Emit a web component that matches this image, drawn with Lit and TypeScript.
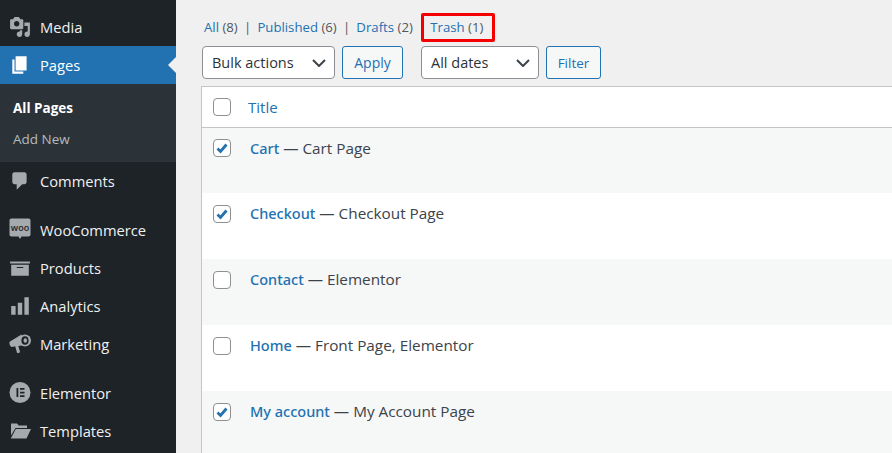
import { LitElement, html, css, svg } from "lit";
import { customElement } from "lit/decorators.js";

const d = (p: string) => svg`<g transform="scale(1.1)"><path d=${p}/></g>`;

const icons: Record<string, any> = {
  media: d("M13 11V4c0-.55-.45-1-1-1h-1.670L9 1H5L3.670 3H2c-.55 0-1 .45-1 1v7c0 .55.45 1 1 1h10c.55 0 1-.45 1-1zM7 4.500c1.380 0 2.500 1.120 2.500 2.500S8.380 9.500 7 9.500 4.500 8.380 4.500 7 5.620 4.500 7 4.500zM14 6h5v10.500c0 1.380-1.120 2.500-2.500 2.500S14 17.880 14 16.500s1.120-2.500 2.500-2.500c.17 0 .34.020.5.050V9h-3V6zm-4 8.050V13h2v3.500c0 1.380-1.120 2.500-2.500 2.500S7 17.880 7 16.500 8.120 14 9.500 14c.17 0 .34.020.5.050z"),
  pages: d("M6 15V2h10v13H6zm-1 1h8v2H3V5h2v11z"),
  comments: d("M5 2h9c1.100 0 2 .9 2 2v7c0 1.100-.9 2-2 2h-2l-5 5v-5H5c-1.100 0-2-.9-2-2V4c0-1.100.9-2 2-2z"),
  woo: svg`<path d="M2.500-.5h17c1.200 0 2 .8 2 2v14c0 1.200-.8 2-2 2h-7l-1.500 2.500-1.500-2.500h-7c-1.200 0-2-.8-2-2v-14c0-1.200.8-2 2-2z"/>
    <text x="11" y="11.500" text-anchor="middle" font-size="9" font-weight="600" fill="#1d2327" font-family="'Open Sans',sans-serif">woo</text>`,
  products: d("M19 4v2H1V4h18zM2 7h16v10H2V7zm11 3V9H7v1h6z"),
  analytics: d("M18 18V2h-4v16h4zm-6 0V7H8v11h4zm-6 0v-8H2v8h4z"),
  marketing: svg`<path d="M12.500 1.500 1 8.500c-.7.500-.7 1.800-.3 3 .4 1.300 1.200 2.500 2.200 2.500l3.300-.7 1.700 6c.2.700.7 1 1.400.8l1-.3c.6-.2.800-.7.600-1.300L9.300 13l6.200-1z"/><circle cx="16" cy="7.500" r="6"/><ellipse cx="16" cy="7.500" rx="3.600" ry="4.300" fill="#1d2327"/><ellipse cx="16.300" cy="7.500" rx="1.700" ry="2.300"/>`,
  elementor: svg`<circle cx="11" cy="10.500" r="10.500"/><path d="M7.500 6h1.800v9H7.500zM11 6h4.500v1.700H11zM11 9.700h4.500v1.700H11zM11 13.300h4.500v1.700H11z" fill="#1d2327"/>`,
  templates: svg`<path d="M2 3.500h6l1.800 2H18V8H6.500L2 15.500z"/><path d="M6.800 9H22l-4.500 9.500H1.800z"/>`,
};

const check = html`<svg viewBox="0 0 14 14"><path d="M2.500 7.500l3 3 6-7"/></svg>`;
const chevron = html`<svg viewBox="0 0 14 8"><path d="M1 1l6 6 6-6"/></svg>`;

const rows = [
  { t: "Cart", s: "Cart Page", c: true },
  { t: "Checkout", s: "Checkout Page", c: true },
  { t: "Contact", s: "Elementor", c: false },
  { t: "Home", s: "Front Page, Elementor", c: false },
  { t: "My account", s: "My Account Page", c: true },
];

@customElement("app-root")
export class AppRoot extends LitElement {
  static styles = css`
    :host { display: flex; width: 892px; height: 453px; overflow: hidden; background: #f0f0f1; font-family: "Open Sans", "Noto Sans", sans-serif; color: #3c434a; }
    * { box-sizing: border-box; }
    .side { width: 176px; flex: none; height: 453px; background: #1d2327; padding-top: 8px; color: #f0f0f1; overflow: hidden; }
    .item { height: 38px; display: flex; align-items: center; font-size: 14.700px; position: relative; }
    .item .ic { width: 40px; flex: none; display: flex; justify-content: center; }
    .item svg { width: 22px; height: 22px; fill: #a7aaad; overflow: visible; }
    .item.cur { background: #2271b1; color: #fff; }
    .item.cur svg { fill: #fff; }
    .item.cur::after { content: ""; position: absolute; right: 0; top: 11px; border: 8px solid transparent; border-right-color: #f0f0f1; border-left-width: 0; }
    .sub { background: #2c3338; height: 78px; padding: 8px 0 0 13px; font-size: 13.500px; color: #b4b9be; }
    .sub div { height: 31px; display: flex; align-items: center; }
    .sub .on { color: #fff; font-weight: 700; }
    .sep { height: 11px; }
    .main { flex: 1; min-width: 0; padding: 14px 0 0 26px; }
    .views { display: flex; align-items: center; font-size: 13.200px; height: 26px; color: #50575e; padding-left: 2px; }
    .views a { color: #2271b1; }
    .views .bar { margin: 0 6.200px; }
    .trash { border: 3px solid #f40000; border-radius: 2px; height: 29px; width: 74px; padding-left: 6px; display: flex; align-items: center; margin-left: 8.500px; }
    .tools { display: flex; margin-top: 6px; }
    .sel { height: 33px; border: 1px solid #8c8f94; border-radius: 4px; background: #fff; font-size: 14.500px; color: #2c3338; display: flex; align-items: center; justify-content: space-between; padding: 0 8px 0 9px; }
    .sel svg { width: 14px; height: 8px; fill: none; stroke: #3c434a; stroke-width: 2; }
    .sel.bulk { width: 133px; }
    .sel.dates { width: 118px; margin-left: 18px; }
    .btn { height: 33px; border: 1px solid #2271b1; border-radius: 3px; background: #f6f7f7; color: #2271b1; font-size: 14px; display: flex; align-items: center; justify-content: center; margin-left: 7px; }
    .btn.apply { width: 61px; }
    .btn.filter { width: 55px; font-size: 13.500px; }
    .table { margin: 7px -1px 0 -1px; border: 1px solid #c3c4c7; border-right: 0; background: #fff; height: 400px; }
    .head { height: 41px; border-bottom: 1px solid #c3c4c7; display: flex; align-items: center; padding-left: 11px; color: #2271b1; font-size: 15px; }
    .head .t { margin-left: 17px; }
    .cb { width: 18px; height: 18px; flex: none; border: 1px solid #8c8f94; border-radius: 4px; background: #fff; display: flex; align-items: center; justify-content: center; }
    .cb svg { width: 14px; height: 14px; fill: none; stroke: #2271b1; stroke-width: 2.800; }
    .row { height: 66px; display: flex; align-items: flex-start; padding-left: 11px; font-size: 15.300px; background: #fff; }
    .row:nth-child(odd) { background: #f6f7f7; }
    .row:first-child { height: 65px; }
    .row .cb { margin-top: 12px; }
    .row:first-child .cb { margin-top: 11px; }
    .row .txt { margin-left: 19px; margin-top: 10px; }
    .row a { color: #2271b1; font-family: "Noto Sans", sans-serif; font-size: 14.500px; font-weight: 500; }
  `;

  private item(ic: string, label: string, cur = false) {
    return html`<div class="item ${cur ? "cur" : ""}"><span class="ic"><svg viewBox="0 0 22 22">${icons[ic]}</svg></span>${label}</div>`;
  }

  render() {
    return html`
      <nav class="side">
        ${this.item("media", "Media")}
        ${this.item("pages", "Pages", true)}
        <div class="sub"><div class="on">All Pages</div><div>Add New</div></div>
        ${this.item("comments", "Comments")}
        <div class="sep"></div>
        ${this.item("woo", "WooCommerce")}
        ${this.item("products", "Products")}
        ${this.item("analytics", "Analytics")}
        ${this.item("marketing", "Marketing")}
        <div class="sep"></div>
        ${this.item("elementor", "Elementor")}
        ${this.item("templates", "Templates")}
      </nav>
      <main class="main">
        <div class="views">
          <a>All</a>&nbsp;(8)<span class="bar">|</span><a>Published</a>&nbsp;(6)<span class="bar">|</span><a>Drafts</a>&nbsp;(2)
          <span class="trash"><a>Trash</a>&nbsp;(1)</span>
        </div>
        <div class="tools">
          <div class="sel bulk">Bulk actions${chevron}</div>
          <div class="btn apply">Apply</div>
          <div class="sel dates">All dates${chevron}</div>
          <div class="btn filter">Filter</div>
        </div>
        <div class="table">
          <div class="head"><span class="cb"></span><span class="t">Title</span></div>
          <div>
            ${rows.map(r => html`<div class="row"><span class="cb">${r.c ? check : ""}</span><span class="txt"><a>${r.t}</a> — ${r.s}</span></div>`)}
          </div>
        </div>
      </main>
    `;
  }
}
